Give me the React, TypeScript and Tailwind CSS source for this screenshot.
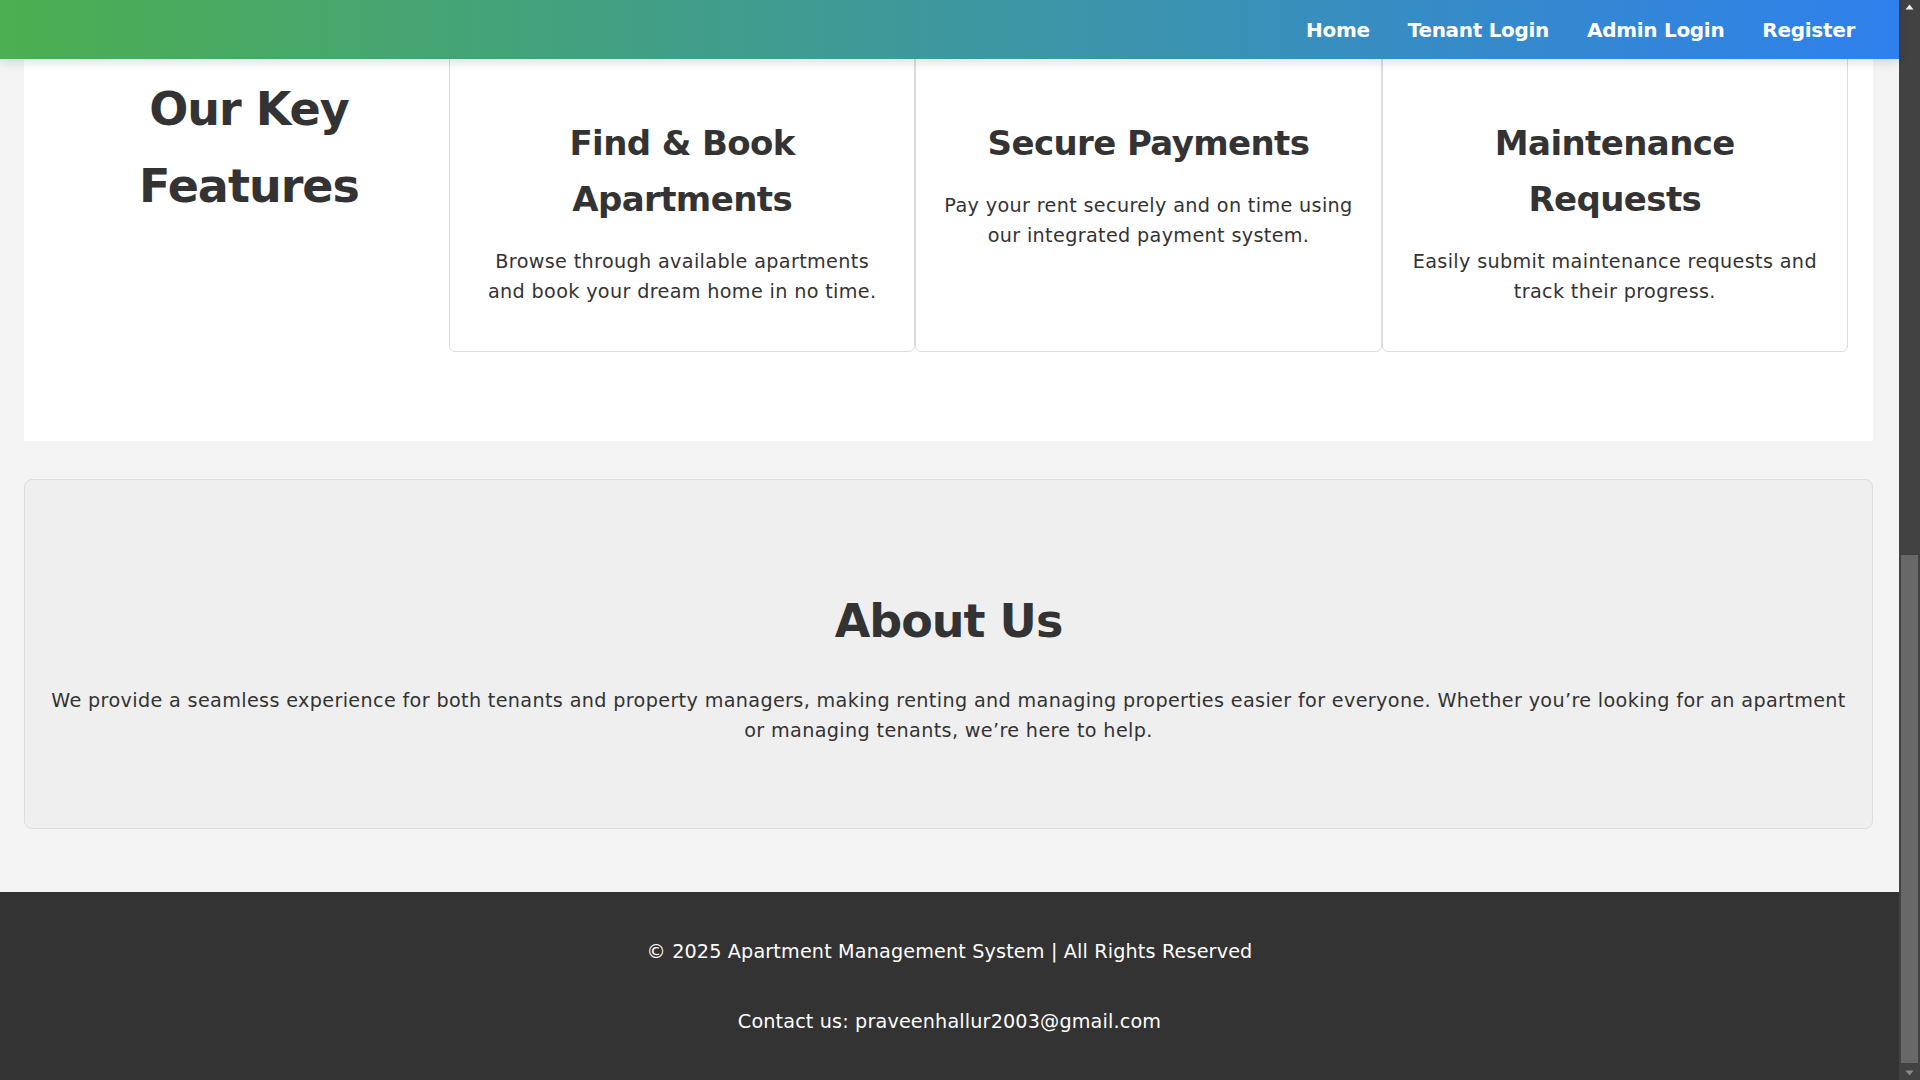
const features = [
  {
    title: "Find & Book Apartments",
    text: "Browse through available apartments and book your dream home in no time.",
  },
  {
    title: "Secure Payments",
    text: "Pay your rent securely and on time using our integrated payment system.",
  },
  {
    title: "Maintenance Requests",
    text: "Easily submit maintenance requests and track their progress.",
  },
];

const links = ["Home", "Tenant Login", "Admin Login", "Register"];

function Scrollbar() {
  return (
    <div className="w-[21px] shrink-0 bg-[#424242] flex flex-col items-center">
      <svg width="9" height="17" viewBox="0 0 9 17" className="shrink-0">
        <path d="M0.5 9.5 L4.5 4.5 L8.5 9.5 Z" fill="#f1f1f1" />
      </svg>
      <div className="flex-1 w-full px-[2px] flex flex-col justify-end">
        <div className="h-[508px] bg-[#686868]" />
      </div>
      <svg width="9" height="17" viewBox="0 0 9 17" className="shrink-0">
        <path d="M0.5 7.5 L4.5 12.5 L8.5 7.5 Z" fill="#8a8a8a" />
      </svg>
    </div>
  );
}

export default function App() {
  return (
    <div className="h-screen flex overflow-hidden bg-[#f4f4f4] text-[#333] font-['DejaVu_Sans',sans-serif]">
      <div className="relative flex-1 flex flex-col">
        <nav className="absolute inset-x-0 top-0 z-10 h-[59px] flex items-center justify-end gap-[38px] pr-[44px] bg-linear-to-r/srgb from-[#4CAF50] to-[#2F80ED] shadow-[0_4px_10px_rgba(0,0,0,0.12)]">
          {links.map((l) => (
            <a key={l} href="#" className="text-white text-[20px] font-semibold tracking-[-0.3px]">
              {l}
            </a>
          ))}
        </nav>

        <div className="pl-6 pr-[26px]">
          <section className="bg-white px-[25px] pt-[10px] pb-[89px] flex">
            <div className="w-[400px] shrink-0 pt-[61px]">
              <h2 className="text-center text-[46px] leading-[77px] font-semibold tracking-[-1px]">
                Our Key Features
              </h2>
            </div>
            {features.map((f) => (
              <div
                key={f.title}
                className="flex-1 border border-[#ddd] rounded-md px-[27px] pt-[104px] pb-[44px] text-center"
              >
                <h3 className="text-[34px] leading-[56px] font-semibold tracking-[-0.6px] mb-[20px]">{f.title}</h3>
                <p className="text-[19.2px] leading-[30px] tracking-[0.35px]">{f.text}</p>
              </div>
            ))}
          </section>

          <section className="mt-[38px] mb-[63px] bg-[#efefef] border border-[#ddd] rounded-lg px-[25px] pt-[103px] pb-[82px] text-center">
            <h2 className="text-[46px] leading-[77px] font-semibold tracking-[-1px] mb-[26px]">About Us</h2>
            <p className="text-[19.2px] leading-[30px] tracking-[0.35px]">
              We provide a seamless experience for both tenants and property managers, making renting and managing
              properties easier for everyone. Whether you’re looking for an apartment or managing tenants, we’re here
              to help.
            </p>
          </section>
        </div>

        <footer className="bg-[#333] text-white text-center py-[45px] flex flex-col gap-[40px] text-[19.2px] leading-[30px] tracking-[0.15px]">
          <p>© 2025 Apartment Management System | All Rights Reserved</p>
          <p>Contact us: praveenhallur2003@gmail.com</p>
        </footer>
      </div>
      <Scrollbar />
    </div>
  );
}
